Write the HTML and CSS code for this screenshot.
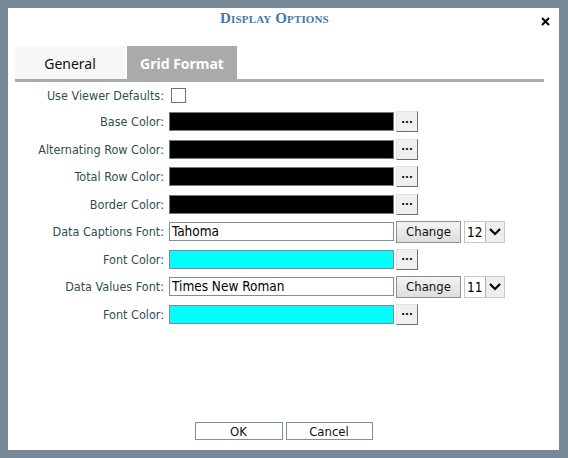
FILE: index.html
```html
<!DOCTYPE html>
<html lang="en">
<head>
  <meta charset="UTF-8">
  <title>Display Options</title>
  <link rel="stylesheet" href="styles.css">
</head>
<body>
<div class="dialog">
  <div class="dialog-header">
    <span class="dialog-title">Display Options</span>
    <button class="close-btn" type="button" title="Close">
      <svg width="9" height="9" viewBox="0 0 9 9"><path d="M1 1 L8 8 M8 1 L1 8" stroke="#000" stroke-width="2" fill="none"/></svg>
    </button>
  </div>
  <div class="tabs">
    <div class="tab">General</div>
    <div class="tab active">Grid Format</div>
  </div>
  <div class="tab-line"></div>
  <div class="form">
    <div class="row first">
      <label>Use Viewer Defaults:</label>
      <span class="checkbox"></span>
    </div>
    <div class="row">
      <label>Base Color:</label>
      <span class="swatch black"></span>
      <button class="dots" type="button">...</button>
    </div>
    <div class="row">
      <label>Alternating Row Color:</label>
      <span class="swatch black"></span>
      <button class="dots" type="button">...</button>
    </div>
    <div class="row">
      <label>Total Row Color:</label>
      <span class="swatch black"></span>
      <button class="dots" type="button">...</button>
    </div>
    <div class="row">
      <label>Border Color:</label>
      <span class="swatch black"></span>
      <button class="dots" type="button">...</button>
    </div>
    <div class="row">
      <label>Data Captions Font:</label>
      <span class="text-box">Tahoma</span>
      <button class="change-btn" type="button">Change</button>
      <div class="size-select"><span class="size-val">12</span><span class="size-arrow"><svg width="14" height="9" viewBox="0 0 14 9"><path d="M2 2 L7 7 L12 2" stroke="#000" stroke-width="2.2" fill="none"/></svg></span></div>
    </div>
    <div class="row">
      <label>Font Color:</label>
      <span class="swatch cyan"></span>
      <button class="dots" type="button">...</button>
    </div>
    <div class="row">
      <label>Data Values Font:</label>
      <span class="text-box">Times New Roman</span>
      <button class="change-btn" type="button">Change</button>
      <div class="size-select"><span class="size-val">11</span><span class="size-arrow"><svg width="14" height="9" viewBox="0 0 14 9"><path d="M2 2 L7 7 L12 2" stroke="#000" stroke-width="2.2" fill="none"/></svg></span></div>
    </div>
    <div class="row">
      <label>Font Color:</label>
      <span class="swatch cyan"></span>
      <button class="dots" type="button">...</button>
    </div>
  </div>
  <div class="footer">
    <button class="footer-btn ok" type="button">OK</button>
    <button class="footer-btn cancel" type="button">Cancel</button>
  </div>
</div>
</body>
</html>
```

FILE: styles.css
```css
body {
  margin: 0;
  padding: 0;
  background: #778899;
  font-family: "DejaVu Sans Condensed", "DejaVu Sans", sans-serif;
  font-stretch: condensed;
}
.dialog {
  margin: 8px 9px 8px 8px;
  width: 551px;
  height: 442px;
  background: #fff;
  display: flex;
  flex-direction: column;
}
.dialog-header {
  display: flex;
  align-items: flex-start;
  height: 38px;
}
.dialog-title {
  flex: 1;
  text-align: center;
  font-family: "Liberation Serif", serif;
  font-variant: small-caps;
  font-weight: bold;
  font-size: 15px;
  color: #3f78b0;
  padding-top: 2px;
  letter-spacing: 0.01em;
}
.close-btn {
  width: 9px;
  height: 9px;
  padding: 0;
  border: none;
  background: none;
  margin: 9px 9px 0 0;
  display: flex;
  cursor: pointer;
}
.tabs {
  display: flex;
  gap: 2px;
  margin-left: 7px;
  height: 33px;
}
.tab {
  width: 110px;
  background: #f7f7f7;
  color: #111;
  font-family: "Noto Sans", sans-serif;
  font-stretch: normal;
  font-size: 14px;
  display: flex;
  align-items: center;
  justify-content: center;
  padding-top: 1px;
  box-sizing: border-box;
}
.tab.active {
  background: #aaaaaa;
  color: #fff;
  font-weight: bold;
}
.tab-line {
  height: 3px;
  background: #aaaaaa;
  margin: 0 15px 0 7px;
}
.form {
  display: flex;
  flex-direction: column;
}
.row {
  display: flex;
  align-items: center;
  height: 27.5px;
}
.row.first {
  height: 26px;
}
.row label {
  width: 161px;
  padding-right: 5px;
  box-sizing: border-box;
  text-align: right;
  font-size: 12.5px;
  color: #2f4f4f;
  white-space: nowrap;
}
.checkbox {
  width: 13px;
  height: 13px;
  border: 1px solid #707070;
  background: #fff;
  margin-left: 2px;
}
.swatch, .text-box {
  width: 225px;
  height: 19px;
  box-sizing: border-box;
  border: 1px solid #6c7c8c;
}
.swatch.black { background: #000; }
.swatch.cyan { background: #00ffff; border-color: #7c8c9c; }
.text-box {
  background: #fff;
  border-color: #7f8e9c;
  font-size: 13.5px;
  color: #000;
  padding-left: 2px;
  line-height: 17px;
}
.dots {
  width: 22px;
  height: 21px;
  margin-left: 2px;
  padding: 0 0 4px;
  box-sizing: border-box;
  background: #f0f0f0;
  border: 1px solid;
  border-color: #e2e2e2 #6f6f6f #6f6f6f #e2e2e2;
  font-size: 11px;
  font-weight: bold;
  color: #000;
  line-height: 10px;
  font-family: inherit;
}
.change-btn {
  width: 65px;
  height: 22px;
  margin-left: 2px;
  padding: 0;
  background: linear-gradient(#f3f3f3, #dedede);
  border: 1px solid #8f8f8f;
  font-family: inherit;
  font-size: 13px;
  color: #111;
}
.size-select {
  display: flex;
  margin-left: 3px;
  height: 22px;
  width: 41px;
  box-sizing: border-box;
  border: 1px solid #c8c8c8;
  background: #fff;
}
.size-val {
  width: 18px;
  font-size: 13.5px;
  line-height: 20px;
  padding-left: 2px;
  color: #000;
}
.size-arrow {
  flex: 1;
  background: #eeeeee;
  border-left: 1px solid #b0b0b0;
  display: flex;
  align-items: center;
  justify-content: center;
}
.footer {
  margin-top: auto;
  margin-bottom: 10px;
  display: flex;
  justify-content: center;
  gap: 3px;
}
.footer-btn {
  height: 18px;
  padding: 0;
  background: #fff;
  border: 1px solid #7d8fa2;
  font-family: inherit;
  font-size: 13px;
  color: #111;
}
.footer-btn.ok { width: 88px; }
.footer-btn.cancel { width: 87px; }
```
